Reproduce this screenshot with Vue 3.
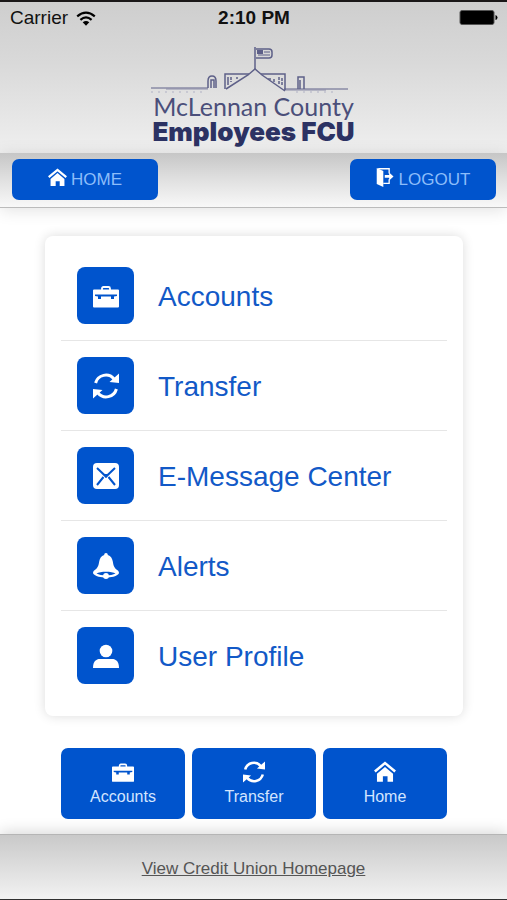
<template>
  <div class="app">
    <!-- icon sprite -->
    <svg class="sprite" aria-hidden="true">
      <symbol id="briefcase" viewBox="0 0 26 26">
        <path d="M9 8V5.500Q9 4 10.500 4H15.500Q17 4 17 5.500V8" fill="none" stroke="currentColor" stroke-width="1.800" />
        <path fill="currentColor" fill-rule="evenodd" d="M1 6.500H25Q26 6.500 26 7.500V23.500Q26 24.500 25 24.500H1Q0 24.500 0 23.500V7.500Q0 6.500 1 6.500ZM2 11.500V13L5 13.500V16H8V13.500H18V16H21V13.500L24 13V11.500Z" />
      </symbol>
      <symbol id="refresh" viewBox="0 0 26 26">
        <path d="M2.600 10A10.600 10.600 0 0 1 21 6M23.400 16A10.600 10.600 0 0 1 5 20" fill="none" stroke="currentColor" stroke-width="3" />
        <path d="M26 .5V10L16.500 9ZM0 25.500V16L9.500 17Z" fill="currentColor" />
      </symbol>
      <symbol id="mail" viewBox="0 0 26 26">
        <rect width="26" height="26" rx="4" fill="currentColor" />
        <path d="M4 5L13 13.500L22 5" fill="none" stroke="#0054cd" stroke-width="2" />
        <path d="M9.500 11H16.500L13 15Z" fill="#0054cd" />
        <path d="M4 22L10.500 14M22 22L15.500 14" fill="none" stroke="#0054cd" stroke-width="2" />
      </symbol>
      <symbol id="bell" viewBox="0 0 26 26">
        <path fill="currentColor" fill-rule="evenodd" d="M13 0C14.200 0 14.800 .9 14.800 1.900C18 2.800 19.300 5.500 19.800 8.500C20.400 13 21.500 15.200 24.500 17.200C26 18.200 26.300 20 25.500 21C23.500 23.500 18 24.500 13 24.500C8 24.500 2.500 23.500 .5 21C-.3 20 0 18.200 1.500 17.200C4.500 15.200 5.600 13 6.200 8.500C6.700 5.500 8 2.800 11.200 1.900C11.200 .9 11.800 0 13 0ZM3.500 20.500C8 23 18 23 22.500 20.500C19 18 7 18 3.500 20.500Z" />
        <circle cx="13" cy="23" r="2.900" fill="currentColor" />
      </symbol>
      <symbol id="user" viewBox="0 0 26 26">
        <circle cx="13" cy="8" r="6.300" fill="currentColor" />
        <path d="M0 25C0 18.500 3 16 7 16H19C23 16 26 18.500 26 25Z" fill="currentColor" />
      </symbol>
      <symbol id="house" viewBox="0 0 26 26">
        <path d="M1 12.500L13 2.500L25 12.500" fill="none" stroke="currentColor" stroke-width="3" />
        <path d="M13 7L22.500 15V24.500H16V18H10.500V24.500H3.500V15Z" fill="currentColor" />
      </symbol>
      <symbol id="exit" viewBox="0 0 26 26">
        <path d="M1 0L10 4V26L1 22Z" fill="currentColor" />
        <path d="M3 1H18V7.500M18 15.500V21H10" fill="none" stroke="currentColor" stroke-width="1.800" />
        <path d="M12 9.500H18V6L24 11.500L18 17V13.500H12Z" fill="currentColor" />
      </symbol>
    </svg>

    <header class="header">
      <div class="status">
        <span class="carrier">
          Carrier
          <svg class="wifi" viewBox="0 0 20 15" aria-hidden="true">
            <path d="M1.200 5.300Q10 -2.200 18.800 5.300M4.400 8.800Q10 4 15.600 8.800" fill="none" stroke="#000" stroke-width="2.200" />
            <path d="M6.700 11.300Q10 8.500 13.300 11.300L10 14.800Z" />
          </svg>
        </span>
        <strong>2:10 PM</strong>
        <svg class="battery" viewBox="0 0 38 16" aria-label="Battery full">
          <rect x="0.500" y="0.500" width="34" height="14" rx="2" stroke="#555" />
          <path d="M36 5Q38 5.500 38 7.500T36 10Z" />
        </svg>
      </div>

      <div class="logo">
        <svg class="courthouse" viewBox="5 -1 206 48" fill="none" stroke="#5e6088" aria-hidden="true">
          <path d="M5 42H62M138 43H202" stroke-width="1" />
          <path d="M20 43H62M138 44H180" stroke-width="1" stroke="#8c8da9" />
          <path d="M5 46H58M150 46H190" stroke-dasharray="2 5" stroke="#b0b1c4" />
          <path d="M109 1V24" stroke-width="1.500" />
          <path d="M110 3H123Q126 3 126 6V9Q126 12 123 12H110" stroke-width="1.500" />
          <path d="M111 5H117M111 7H117" stroke-width="2" />
          <path d="M118 6H124M112 9H124" />
          <path d="M62 42V35Q62 30 66 30T70 35V42M65 42V34H68V42" stroke-width="1.500" />
          <path d="M152 43V31H158V43M154 43V34" stroke-width="1.500" />
          <path d="M79 43V28H103M115 28H139V44M82 39V31" stroke-width="1.500" />
          <path d="M80 43L102 29L109 23L116 29L139 45" stroke-width="1.500" />
          <path d="M85 31V36M91 31V33M122 33H125M128 33V36M133 31V38M136 32V40" stroke-width="1.500" stroke-dasharray="3 1" />
        </svg>
        <span class="county">McLennan County</span>
        <span class="fcu">Employees FCU</span>
      </div>
    </header>

    <nav class="topbar">
      <button class="nav-btn" type="button">
        <svg class="nav-icon" aria-hidden="true"><use href="#house" /></svg>
        HOME
      </button>
      <button class="nav-btn" type="button">
        <svg class="nav-icon" aria-hidden="true"><use href="#exit" /></svg>
        LOGOUT
      </button>
    </nav>

    <main class="content">
      <ul class="card">
        <li v-for="item in menu" :key="item.label">
          <a href="#" class="row" @click.prevent>
            <span class="badge">
              <svg class="badge-icon" aria-hidden="true"><use :href="item.icon" /></svg>
            </span>
            <span class="label">{{ item.label }}</span>
          </a>
        </li>
      </ul>

      <div class="tiles">
        <button v-for="tile in tiles" :key="tile.label" class="tile" type="button">
          <svg class="tile-icon" aria-hidden="true"><use :href="tile.icon" /></svg>
          {{ tile.label }}
        </button>
      </div>
    </main>

    <footer class="footer">
      <a href="#" @click.prevent>View Credit Union Homepage</a>
    </footer>
  </div>
</template>

<script setup>
const menu = [
  { label: 'Accounts', icon: '#briefcase' },
  { label: 'Transfer', icon: '#refresh' },
  { label: 'E-Message Center', icon: '#mail' },
  { label: 'Alerts', icon: '#bell' },
  { label: 'User Profile', icon: '#user' }
]

const tiles = [
  { label: 'Accounts', icon: '#briefcase' },
  { label: 'Transfer', icon: '#refresh' },
  { label: 'Home', icon: '#house' }
]
</script>

<style>
body {
  background: #fff;
}
</style>

<style scoped>
.app {
  display: flex;
  flex-direction: column;
  min-height: 100vh;
  box-sizing: border-box;
  border-top: 2px solid #1a1718;
  border-bottom: 1px solid #333;
  font-family: "Liberation Sans", Arial, sans-serif;
}

.sprite {
  display: none;
}

/* Header */
.header {
  background: linear-gradient(#cecece, #d9d9d9 40%, #efefef);
  padding-bottom: 8px;
}

.status {
  display: grid;
  grid-template-columns: 1fr auto 1fr;
  align-items: center;
  padding: 4px 9px 0 10px;
  font-size: 19px;
  line-height: 24px;
  color: #111;
}

.carrier {
  display: flex;
  align-items: center;
  gap: 8px;
}

.wifi {
  width: 20px;
  height: 15px;
}

.battery {
  width: 39px;
  height: 16px;
  justify-self: end;
}

.logo {
  display: flex;
  flex-direction: column;
  align-items: center;
  padding-top: 15px;
  color: #2c3263;
}

.courthouse {
  width: 206px;
  height: 48px;
}

.county {
  font-family: Lato, sans-serif;
  font-size: 25px;
  line-height: 26px;
  color: #4b4f7a;
}

.fcu {
  font-family: Inter, sans-serif;
  font-size: 26px;
  line-height: 26px;
  font-weight: 900;
}

/* Top buttons */
.topbar {
  display: flex;
  justify-content: space-between;
  padding: 6px 11px 7px 12px;
  background: linear-gradient(#c6c6c6, #dedede 45%, #f8f8f8);
  border-bottom: 1px solid #bbb;
  box-shadow: 0 2px 16px rgba(0, 0, 0, 0.12);
}

button {
  border: none;
  border-radius: 7px;
  background: #0054cd;
  font-family: inherit;
  cursor: pointer;
}

.nav-btn {
  display: flex;
  align-items: center;
  justify-content: center;
  gap: 4px;
  width: 146px;
  height: 41px;
  padding: 0;
  font-size: 17px;
  color: #8cbdfa;
}

.nav-icon {
  width: 19px;
  height: 19px;
  margin-bottom: 4px;
  color: #fff;
}

/* Menu */
.content {
  flex: 1;
  padding: 28px 44px 15px 45px;
}

.card {
  margin: 0;
  padding: 15px 16px;
  list-style: none;
  background: #fff;
  border-radius: 8px;
  box-shadow: 0 0 12px rgba(0, 0, 0, 0.14);
}

.card li {
  border-bottom: 1px solid #e6e6e6;
}

.card li:last-child {
  border-bottom-color: transparent;
}

.row {
  display: flex;
  align-items: center;
  gap: 24px;
  padding: 16px;
  font-size: 28px;
  color: #1259c7;
  text-decoration: none;
}

.label {
  padding-top: 2px;
}

.badge {
  display: flex;
  align-items: center;
  justify-content: center;
  width: 57px;
  height: 57px;
  border-radius: 8px;
  background: #0054cd;
  color: #fff;
}

.badge-icon {
  width: 26px;
  height: 26px;
}

.tiles {
  display: grid;
  grid-template-columns: repeat(3, 1fr);
  gap: 7px;
  padding: 32px 16px 0;
}

.tile {
  display: flex;
  flex-direction: column;
  align-items: center;
  justify-content: center;
  gap: 5px;
  height: 71px;
  padding: 0;
  font-size: 16px;
  color: #d3e5ff;
}

.tile-icon {
  width: 22px;
  height: 22px;
  color: #fff;
}

/* Footer */
.footer {
  padding: 24px 0 20px;
  text-align: center;
  font-size: 17px;
  line-height: 20px;
  background: linear-gradient(#c9c9c9, #f2f2f2);
  border-top: 1px solid #b5b5b5;
  box-shadow: 0 -2px 14px rgba(0, 0, 0, 0.16);
}

.footer a {
  color: #555;
}
</style>
